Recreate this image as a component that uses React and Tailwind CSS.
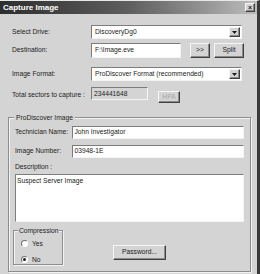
import React from 'react';

const font = { fontFamily: '"Liberation Sans", Arial, sans-serif' };

function Sunken({ className = '', children, gray }) {
    return (
        <div
            className={`border border-t-[#7c7c7c] border-l-[#7c7c7c] border-b-[#f4f4f4] border-r-[#f4f4f4] ${gray ? 'bg-[#d4d4d4]' : 'bg-white'} ${className}`}
        >
            {children}
        </div>
    );
}

function Button({ className = '', children, disabled }) {
    return (
        <div
            className={`flex items-center justify-center border border-t-[#f6f6f6] border-l-[#f6f6f6] border-b-[#404040] border-r-[#404040] bg-[#d4d4d4] shadow-[inset_-1px_-1px_0_#8a8a8a] ${disabled ? 'text-[#a8a8a8]' : 'text-[#1a1a1a]'} ${className}`}
        >
            {children}
        </div>
    );
}

function Combo({ value }) {
    return (
        <Sunken className="w-[151px] h-[14px] flex items-center">
            <span className="flex-1 pl-[3px] leading-none">{value}</span>
            <Button className="w-[11px] h-[10px] mr-[1px]">
                <svg width="5" height="3" viewBox="0 0 5 3"><path d="M0 0h5L2.5 3z" fill="#1a1a1a" /></svg>
            </Button>
        </Sunken>
    );
}

function Radio({ checked, label }) {
    return (
        <div className="flex items-center gap-[4px]">
            <div className="w-[7px] h-[7px] rounded-full border border-t-[#707070] border-l-[#707070] border-b-white border-r-white bg-white flex items-center justify-center">
                {checked && <div className="w-[3px] h-[3px] rounded-full bg-[#1a1a1a]" />}
            </div>
            <span>{label}</span>
        </div>
    );
}

export default function App() {
    return (
        <div
            style={font}
            className="w-[260px] h-[274px] bg-[#d4d4d4] text-[6.7px] text-[#222] flex flex-col border-r-[3px] border-r-[#3a3a3a] border-t border-t-[#e8e8e8] overflow-hidden"
        >
            <div className="h-[13px] bg-gradient-to-r from-[#2e2e2e] via-[#5e5e5e] to-[#bdbdbd] flex items-center justify-between pl-[3px] pr-[2px]">
                <span className="text-white font-bold text-[8px]">Capture Image</span>
                <Button className="w-[10px] h-[9px] text-[7px] font-bold leading-none">×</Button>
            </div>

            <div className="flex items-center mt-[11px]">
                <span className="w-[91px] pl-[12px]">Select Drive:</span>
                <Combo value="DiscoveryDg0" />
            </div>

            <div className="flex items-center mt-[4px]">
                <span className="w-[91px] pl-[12px]">Destination:</span>
                <Sunken className="w-[90px] h-[15px] flex items-center pl-[3px]">F:\Image.eve</Sunken>
                <Button className="w-[20px] h-[15px] ml-[9px]">&gt;&gt;</Button>
                <Button className="w-[30px] h-[15px] ml-[4px]">Split</Button>
            </div>

            <div className="flex items-center mt-[9px]">
                <span className="w-[91px] pl-[12px]">Image Format:</span>
                <Combo value="ProDiscover Format (recommended)" />
            </div>

            <div className="flex items-start mt-[6px]">
                <span className="w-[91px] pl-[12px] mt-[3px]">Total sectors to capture :</span>
                <Sunken gray className="w-[57px] h-[13px] pl-[2px] pt-[1px]">234441648</Sunken>
                <Button disabled className="w-[22px] h-[12px] ml-[10px] mt-[4px]">HPA</Button>
            </div>

            <div className="relative ml-[8px] mr-[6px] mt-[14px] mb-[2px] flex-1 border border-[#8c8c8c] shadow-[1px_1px_0_#f4f4f4,inset_1px_1px_0_#f4f4f4] px-[6px] pt-[8px] flex flex-col">
                <span className="absolute left-[5px] top-[-5px] bg-[#d4d4d4] px-[2px]">ProDiscover Image</span>

                <div className="flex items-center">
                    <span className="w-[58px]">Technician Name:</span>
                    <Sunken className="w-[173px] h-[13px] flex items-center pl-[1px]">John Investigator</Sunken>
                </div>

                <div className="flex items-center mt-[6px]">
                    <span className="w-[58px]">Image Number:</span>
                    <Sunken className="w-[173px] h-[13px] flex items-center pl-[1px]">03948-1E</Sunken>
                </div>

                <span className="mt-[6px] leading-none">Description :</span>
                <Sunken className="w-[229px] h-[48px] mt-[3px] pl-[1px] pt-[1px]">Suspect Server Image</Sunken>

                <div className="flex items-start mt-[8px]">
                    <div className="relative w-[50px] h-[35px] ml-[-2px] border border-[#8c8c8c] shadow-[1px_1px_0_#f4f4f4,inset_1px_1px_0_#f4f4f4] flex flex-col gap-[6px] pl-[7px] pt-[8px]">
                        <span className="absolute left-[4px] top-[-5px] bg-[#d4d4d4] px-[1px]">Compression</span>
                        <Radio label="Yes" />
                        <Radio checked label="No" />
                    </div>
                    <Button className="w-[53px] h-[15px] ml-[50px] mt-[15px]">Password...</Button>
                </div>
            </div>
        </div>
    );
}
